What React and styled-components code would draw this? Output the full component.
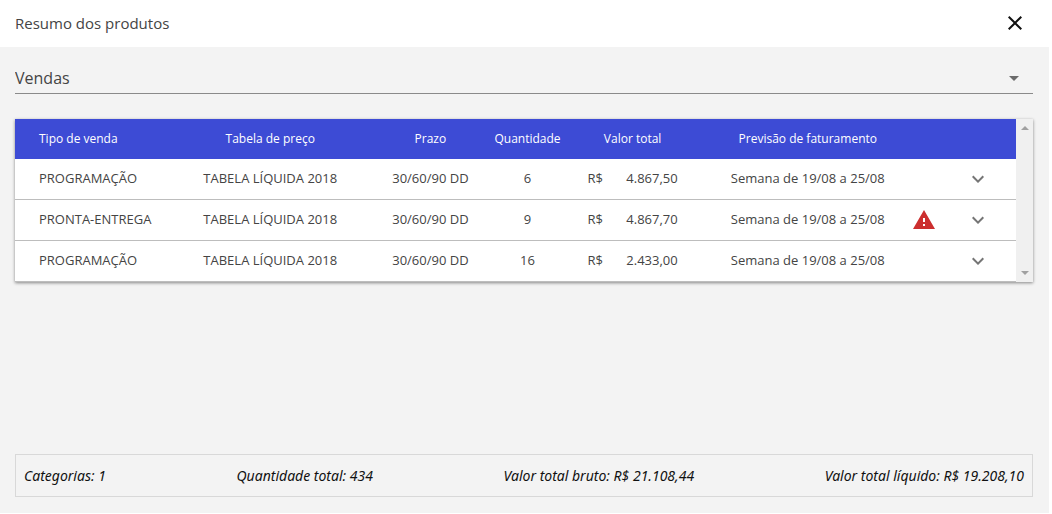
import { useState } from "react";
import styled, { createGlobalStyle } from "styled-components";

const sales = [
  { id: 1, type: "PROGRAMAÇÃO", priceTable: "TABELA LÍQUIDA 2018", term: "30/60/90 DD", quantity: 6, total: "4.867,50", forecast: "Semana de 19/08 a 25/08" },
  { id: 2, type: "PRONTA-ENTREGA", priceTable: "TABELA LÍQUIDA 2018", term: "30/60/90 DD", quantity: 9, total: "4.867,70", forecast: "Semana de 19/08 a 25/08", alert: true },
  { id: 3, type: "PROGRAMAÇÃO", priceTable: "TABELA LÍQUIDA 2018", term: "30/60/90 DD", quantity: 16, total: "2.433,00", forecast: "Semana de 19/08 a 25/08" },
];

const columns = ["15.8%", "19.4%", "12.6%", "6.8%", "14.2%", "20.8%", "2.3%", "8.1%"];

const App = () => {
  const [view, setView] = useState("vendas");

  return (
    <>
      <GlobalStyle />
      <StyledDialog role="dialog" aria-labelledby="dialog-title">
        <StyledHeader>
          <h1 id="dialog-title">Resumo dos produtos</h1>
          <IconButton type="button" aria-label="Fechar">
            <svg width="24" height="24" viewBox="0 0 24 24" fill="currentColor">
              <path d="M19 6.41L17.59 5 12 10.59 6.41 5 5 6.41 10.59 12 5 17.59 6.41 19 12 13.41 17.59 19 19 17.59 13.41 12z" />
            </svg>
          </IconButton>
        </StyledHeader>

        <StyledContent>
          <StyledSelect>
            <select aria-label="Visualização" value={view} onChange={(e) => setView(e.target.value)}>
              <option value="vendas">Vendas</option>
            </select>
            <svg width="10" height="5" viewBox="0 0 10 5" fill="#6b6b6b">
              <path d="M0 0h10L5 5z" />
            </svg>
          </StyledSelect>

          <TableCard>
            <StyledTable>
              <colgroup>
                {columns.map((width, i) => (
                  <Column key={i} $width={width} />
                ))}
              </colgroup>
              <thead>
                <tr>
                  <HeadCell $first>Tipo de venda</HeadCell>
                  <HeadCell>Tabela de preço</HeadCell>
                  <HeadCell>Prazo</HeadCell>
                  <HeadCell>Quantidade</HeadCell>
                  <HeadCell>Valor total</HeadCell>
                  <HeadCell>Previsão de faturamento</HeadCell>
                  <HeadCell as="td" />
                  <HeadCell as="td" />
                </tr>
              </thead>
              <tbody>
                {sales.map((sale) => (
                  <tr key={sale.id}>
                    <Cell $first>{sale.type}</Cell>
                    <Cell>{sale.priceTable}</Cell>
                    <Cell>{sale.term}</Cell>
                    <Cell>{sale.quantity}</Cell>
                    <Cell>
                      <Money>
                        <span>R$</span>
                        <span>{sale.total}</span>
                      </Money>
                    </Cell>
                    <Cell>{sale.forecast}</Cell>
                    <IconCell>
                      {sale.alert && (
                        <Icon width="24" height="24" viewBox="0 0 24 24" fill="#cc2f2f" role="img" aria-label="Atenção">
                          <path d="M1 21h22L12 2 1 21zm12-3h-2v-2h2v2zm0-4h-2v-4h2v4z" />
                        </Icon>
                      )}
                    </IconCell>
                    <IconCell $indent>
                      <ExpandButton type="button" aria-label="Expandir">
                        <svg width="24" height="24" viewBox="0 0 24 24" fill="currentColor">
                          <path d="M16.59 8.59L12 13.17 7.41 8.59 6 10l6 6 6-6z" />
                        </svg>
                      </ExpandButton>
                    </IconCell>
                  </tr>
                ))}
              </tbody>
            </StyledTable>
            <ScrollTrack aria-hidden="true">
              <svg width="8" height="4" viewBox="0 0 8 4">
                <path d="M0 4h8L4 0z" />
              </svg>
              <svg width="8" height="4" viewBox="0 0 8 4">
                <path d="M0 0h8L4 4z" />
              </svg>
            </ScrollTrack>
          </TableCard>
        </StyledContent>

        <StyledSummary>
          <span>Categorias: 1</span>
          <span>Quantidade total: 434</span>
          <span>Valor total bruto: R$ 21.108,44</span>
          <span>Valor total líquido: R$ 19.208,10</span>
        </StyledSummary>
      </StyledDialog>
    </>
  );
};

export default App;

const GlobalStyle = createGlobalStyle`
  * {
    box-sizing: border-box;
  }
  body {
    margin: 0;
    background: #fff;
    font-family: "Open Sans", sans-serif;
    color: #444;
  }
`;

const StyledDialog = styled.section`
  display: flex;
  flex-direction: column;
  min-height: calc(100vh - 1px);
  margin-right: 3px;
  background: #f3f3f3;
`;

const StyledHeader = styled.header`
  display: flex;
  align-items: center;
  justify-content: space-between;
  height: 47px;
  padding: 0 22px 1px 15px;
  background: #fff;
  h1 {
    margin: 0;
    font-size: 15px;
    font-weight: 400;
  }
`;

const IconButton = styled.button`
  display: flex;
  padding: 0;
  border: none;
  background: none;
  color: #111;
  cursor: pointer;
`;

const ExpandButton = styled(IconButton)`
  margin: 0 auto;
  color: #757575;
`;

const StyledContent = styled.main`
  flex: 1;
  padding: 16px 16px 0 15px;
`;

const StyledSelect = styled.div`
  position: relative;
  margin-bottom: 25px;
  border-bottom: 1px solid #8a8a8a;
  select {
    display: block;
    appearance: none;
    width: 100%;
    height: 30px;
    padding: 0;
    border: none;
    outline: none;
    background: transparent;
    font-family: inherit;
    font-size: 16px;
    color: #444;
  }
  svg {
    position: absolute;
    top: 13px;
    right: 14px;
    pointer-events: none;
  }
`;

const TableCard = styled.div`
  display: flex;
  background: #fff;
  box-shadow: 0 1px 3px rgba(0, 0, 0, 0.45);
`;

const StyledTable = styled.table`
  flex: 1;
  width: 100%;
  table-layout: fixed;
  border-collapse: separate;
  border-spacing: 0;
  font-size: 13px;
`;

const Column = styled.col`
  width: ${({ $width }) => $width};
`;

const HeadCell = styled.th`
  height: 40px;
  padding: 0 0 2px ${({ $first }) => ($first ? "24px" : "0")};
  background: #3d4bd5;
  color: #fff;
  font-size: 12px;
  font-weight: 500;
  text-align: ${({ $first }) => ($first ? "left" : "center")};
  white-space: nowrap;
`;

const Cell = styled.td`
  height: 41px;
  padding: 0 0 2px ${({ $first }) => ($first ? "24px" : "0")};
  border-bottom: 1px solid #bdbdbd;
  text-align: ${({ $first }) => ($first ? "left" : "center")};
  white-space: nowrap;
`;

const IconCell = styled(Cell)`
  padding: 0 0 0 ${({ $indent }) => ($indent ? "6px" : "0")};
`;

const Money = styled.div`
  display: flex;
  justify-content: space-between;
  padding: 0 26px;
`;

const Icon = styled.svg`
  display: block;
  margin: 0 auto;
`;

const ScrollTrack = styled.div`
  display: flex;
  flex-direction: column;
  align-items: center;
  justify-content: space-between;
  width: 17px;
  padding: 7px 0;
  background: #f0f0f0;
  fill: #a0a0a0;
`;

const StyledSummary = styled.footer`
  display: flex;
  align-items: center;
  justify-content: space-between;
  height: 43px;
  margin: 0 16px 16px 15px;
  padding: 0 8px;
  border: 1px solid #d8d8d8;
  color: #111;
  font-family: "Noto Sans", "Open Sans", sans-serif;
  font-size: 14px;
  font-style: italic;
`;
